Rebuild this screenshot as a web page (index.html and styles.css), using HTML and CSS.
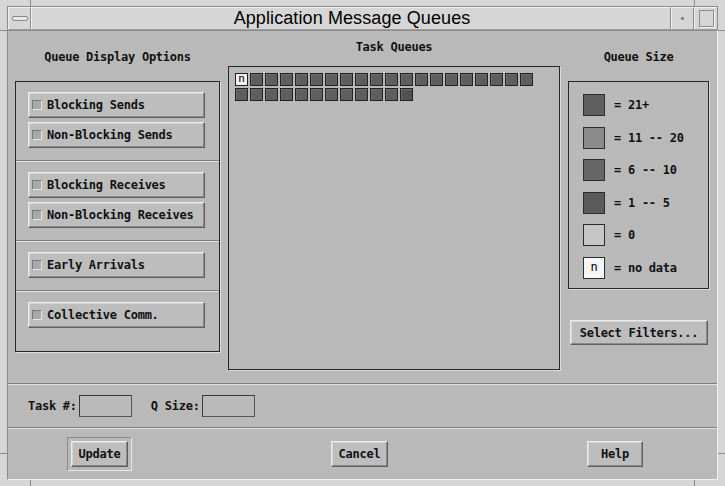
FILE: index.html
```html
<!DOCTYPE html>
<html lang="en">
<head>
    <meta charset="UTF-8">
    <title>Application Message Queues</title>
    <link rel="stylesheet" href="styles.css">
</head>
<body>
<div class="window">
    <span class="tick tick-v tick-tl"></span>
    <span class="tick tick-h tick-lt"></span>
    <span class="tick tick-v tick-tr"></span>
    <span class="tick tick-h tick-rt"></span>
    <span class="tick tick-v tick-bl"></span>
    <span class="tick tick-h tick-lb"></span>
    <span class="tick tick-v tick-br"></span>
    <span class="tick tick-h tick-rb"></span>

    <div class="titlebar">
        <div class="tb-btn tb-menu"><span class="bar"></span></div>
        <div class="tb-title">Application Message Queues</div>
        <div class="tb-btn tb-min"><span class="dot"></span></div>
        <div class="tb-btn tb-max"><span class="sq"></span></div>
    </div>

    <div class="content">
        <div class="top">
            <!-- left column -->
            <div class="col col-left">
                <div class="heading">Queue Display Options</div>
                <div class="box options">
                    <div class="group">
                        <button class="opt"><span class="check"></span>Blocking Sends</button>
                        <button class="opt"><span class="check"></span>Non-Blocking Sends</button>
                    </div>
                    <div class="group">
                        <button class="opt"><span class="check"></span>Blocking Receives</button>
                        <button class="opt"><span class="check"></span>Non-Blocking Receives</button>
                    </div>
                    <div class="group">
                        <button class="opt"><span class="check"></span>Early Arrivals</button>
                    </div>
                    <div class="group last">
                        <button class="opt"><span class="check"></span>Collective Comm.</button>
                    </div>
                </div>
            </div>

            <!-- middle column -->
            <div class="col col-mid">
                <div class="heading">Task Queues</div>
                <div class="box tasks">
                    <div class="grid">
                        <span class="q q-none">n</span>
                        <span class="q"></span><span class="q"></span><span class="q"></span><span class="q"></span>
                        <span class="q"></span><span class="q"></span><span class="q"></span><span class="q"></span>
                        <span class="q"></span><span class="q"></span><span class="q"></span><span class="q"></span>
                        <span class="q"></span><span class="q"></span><span class="q"></span><span class="q"></span>
                        <span class="q"></span><span class="q"></span><span class="q"></span>
                        <span class="q"></span><span class="q"></span><span class="q"></span><span class="q"></span>
                        <span class="q"></span><span class="q"></span><span class="q"></span><span class="q"></span>
                        <span class="q"></span><span class="q"></span><span class="q"></span><span class="q q-big"></span>
                    </div>
                </div>
            </div>

            <!-- right column -->
            <div class="col col-right">
                <div class="heading">Queue Size</div>
                <div class="box legend">
                    <div class="row"><span class="swatch s-21"></span>= 21+</div>
                    <div class="row"><span class="swatch s-11"></span>= 11 -- 20</div>
                    <div class="row"><span class="swatch s-6"></span>= 6 -- 10</div>
                    <div class="row"><span class="swatch s-1"></span>= 1 -- 5</div>
                    <div class="row"><span class="swatch s-0"></span>= 0</div>
                    <div class="row"><span class="swatch s-n">n</span>= no data</div>
                </div>
                <button class="btn filters">Select Filters...</button>
            </div>
        </div>

        <div class="task-row">
            <label>Task #:</label>
            <input type="text" class="field">
            <label class="qsize">Q Size:</label>
            <input type="text" class="field">
        </div>

        <div class="actions">
            <div class="default-ring"><button class="btn act act-update">Update</button></div>
            <button class="btn act act-cancel">Cancel</button>
            <button class="btn act act-help">Help</button>
        </div>
    </div>
</div>
</body>
</html>
```

FILE: styles.css
```css
body {
    margin: 0;
    padding: 0;
    background-color: #d6d6d6;
}

.window {
    position: relative;
    width: 725px;
    height: 486px;
    box-sizing: border-box;
    padding: 6px 7px 6px 7px;
    background-color: #d6d6d6;
    font-family: "DejaVu Sans Mono", "Liberation Mono", monospace;
    font-size: 12px;
    font-weight: bold;
    letter-spacing: -0.25px;
    color: #111;
}

/* resize handle marks on the frame */
.tick {
    position: absolute;
    background-color: #8c8c8c;
}

.tick-v { width: 1px; height: 6px; }
.tick-h { width: 7px; height: 1px; }
.tick-tl { left: 30px; top: 0; }
.tick-tr { left: 694px; top: 0; }
.tick-bl { left: 30px; bottom: 0; }
.tick-br { left: 694px; bottom: 0; }
.tick-lt { left: 0; top: 30px; }
.tick-rt { right: 0; top: 30px; }
.tick-lb { left: 0; top: 453px; }
.tick-rb { right: 0; top: 453px; }

.titlebar {
    display: flex;
    height: 24px;
    box-sizing: border-box;
    border-top: 1px solid #8c8c8c;
    border-left: 1px solid #8c8c8c;
    border-right: 1px solid #8c8c8c;
}

.tb-btn,
.tb-title {
    box-sizing: border-box;
    border-top: 1px solid #f0f0f0;
    border-left: 1px solid #f0f0f0;
    border-right: 1px solid #8c8c8c;
    border-bottom: 1px solid #9c9c9c;
    background-color: #d6d6d6;
    display: flex;
    align-items: center;
    justify-content: center;
}

.tb-btn {
    width: 23px;
}

.tb-max {
    border-right: none;
}

.tb-title {
    flex: 1;
    font-family: "Liberation Sans", Arial, sans-serif;
    font-weight: normal;
    font-size: 18px;
    letter-spacing: 0.1px;
    color: #000;
    padding-left: 2px;
}

.bar {
    width: 14px;
    height: 3px;
    border: 1px solid #888;
    border-radius: 2px;
    background-color: #e8e8e8;
}

.dot {
    width: 3px;
    height: 3px;
    background-color: #888;
}

.sq {
    width: 13px;
    height: 15px;
    border: 1px solid #8c8c8c;
    box-shadow: 1px 1px 0 #f0f0f0;
}

.content {
    height: 450px;
    box-sizing: border-box;
    border: 1px solid #8c8c8c;
    border-bottom-color: #f0f0f0;
    border-right-color: #f0f0f0;
    background-color: #b9b9b9;
    display: flex;
    flex-direction: column;
}

.top {
    display: grid;
    grid-template-columns: 205px 332px 141px;
    column-gap: 8px;
    padding-left: 7px;
    height: 352px;
    border-bottom: 1px solid #7e7e7e;
    box-shadow: 0 1px 0 #e2e2e2;
}

.col {
    display: flex;
    flex-direction: column;
}

.heading {
    text-align: center;
    line-height: 14px;
}

.col-left .heading,
.col-right .heading {
    margin-top: 19px;
    margin-bottom: 17px;
}

.col-mid .heading {
    margin-top: 9px;
    margin-bottom: 12px;
}

.box {
    box-sizing: border-box;
    border: 1px solid #262626;
    box-shadow: 1px 1px 0 #dcdcdc;
}

/* queue display options */
.options {
    height: 271px;
    display: flex;
    flex-direction: column;
}

.group {
    display: flex;
    flex-direction: column;
    gap: 4px;
    padding: 10px 14px 12px 12px;
}

.group + .group {
    border-top: 1px solid #7e7e7e;
    box-shadow: inset 0 1px 0 #e2e2e2;
    padding-top: 11px;
}

.group.last {
    flex: 1;
}

.opt,
.btn {
    font-family: "DejaVu Sans Mono", "Liberation Mono", monospace;
    font-size: 12px;
    font-weight: bold;
    letter-spacing: -0.25px;
    color: #111;
    background-color: #bdbdbd;
    box-sizing: border-box;
    border: 1px solid;
    border-color: #ececec #5e5e5e #5e5e5e #ececec;
    box-shadow: inset -1px -1px 0 #8a8a8a, inset 1px 1px 0 #d4d4d4;
    padding: 0;
    margin: 0;
    cursor: pointer;
}

.opt {
    height: 26px;
    display: flex;
    align-items: center;
    padding-left: 3px;
    text-align: left;
}

.check {
    width: 10px;
    height: 10px;
    box-sizing: border-box;
    margin-right: 5px;
    border: 1px solid;
    border-color: #7a7a7a #e6e6e6 #e6e6e6 #7a7a7a;
    background-color: #a8a8a8;
}

/* task queues */
.tasks {
    height: 304px;
    padding: 6px 0 0 6px;
}

.grid {
    display: grid;
    grid-template-columns: repeat(20, 13px);
    grid-auto-rows: 13px;
    gap: 2px;
}

.q {
    box-sizing: border-box;
    border: 1px solid #222;
    background-color: #5e5e5e;
    box-shadow: inset 1px 1px 0 #6c6c6c;
}

.q-big {
    background-color: #515151;
}

.q-none {
    background-color: #f2f2f2;
    box-shadow: none;
    font-weight: normal;
    font-size: 11px;
    line-height: 10px;
    text-align: center;
    color: #000;
}

/* legend */
.legend {
    height: 208px;
    padding: 12px 0 0 14px;
    display: flex;
    flex-direction: column;
    gap: 10.5px;
}

.row {
    display: flex;
    align-items: center;
    height: 22px;
}

.swatch {
    width: 22px;
    height: 22px;
    box-sizing: border-box;
    margin-right: 9px;
    border: 1px solid #2c2c2c;
}

.s-21 { background-color: #5f5f5f; }
.s-11 { background-color: #8b8b8b; }
.s-6  { background-color: #666666; }
.s-1  { background-color: #5b5b5b; }
.s-0  { background-color: #c6c6c6; }

.s-n {
    background-color: #f6f6f6;
    font-weight: normal;
    font-size: 12px;
    text-align: center;
    line-height: 19px;
    color: #000;
}

.filters {
    margin: 31px 0 0 2px;
    width: 138px;
    height: 25px;
}

/* task / q size row */
.task-row {
    height: 42px;
    display: flex;
    align-items: center;
    padding-left: 20px;
    margin-top: 1px;
    border-bottom: 1px solid #7e7e7e;
    box-shadow: 0 1px 0 #e2e2e2;
}

.task-row label {
    margin-right: 2px;
}

.task-row .qsize {
    margin-left: 19px;
}

.field {
    width: 53px;
    height: 22px;
    box-sizing: border-box;
    border: 1px solid #3a3a3a;
    border-right-color: #555;
    border-bottom-color: #555;
    background-color: #bababa;
    padding: 0;
}

/* bottom buttons */
.actions {
    flex: 1;
    display: flex;
    align-items: center;
    justify-content: space-between;
    padding: 1px 74px 0 59px;
}

.default-ring {
    padding: 3px;
    border: 1px solid;
    border-color: #8a8a8a #e6e6e6 #e6e6e6 #8a8a8a;
}

.act {
    height: 26px;
    padding: 0;
}

.act-update { width: 57px; }
.act-cancel { width: 57px; }
.act-help { width: 56px; }
```
